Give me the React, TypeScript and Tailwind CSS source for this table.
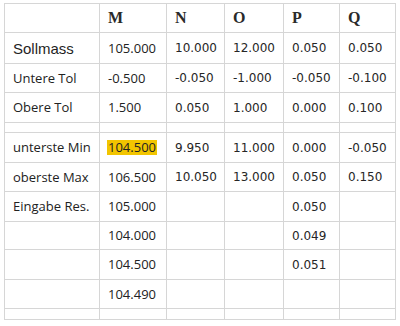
const cols = "grid-cols-[95px_67px_58px_59px_56px_56px]";

type Row = { h: string; cells: string[] };

const rows: Row[] = [
  { h: "h-[29px]", cells: ["", "M", "N", "O", "P", "Q"] },
  { h: "h-[31px]", cells: ["Sollmass", "105.000", "10.000", "12.000", "0.050", "0.050"] },
  { h: "h-[29px]", cells: ["Untere Tol", "-0.500", "-0.050", "-1.000", "-0.050", "-0.100"] },
  { h: "h-[30px]", cells: ["Obere Tol", "1.500", "0.050", "1.000", "0.000", "0.100"] },
  { h: "h-[10px]", cells: ["", "", "", "", "", ""] },
  { h: "h-[30px]", cells: ["unterste Min", "104.500", "9.950", "11.000", "0.000", "-0.050"] },
  { h: "h-[29px]", cells: ["oberste Max", "106.500", "10.050", "13.000", "0.050", "0.150"] },
  { h: "h-[30px]", cells: ["Eingabe Res.", "105.000", "", "", "0.050", ""] },
  { h: "h-[28px]", cells: ["", "104.000", "", "", "0.049", ""] },
  { h: "h-[30px]", cells: ["", "104.500", "", "", "0.051", ""] },
  { h: "h-[29px]", cells: ["", "104.490", "", "", "", ""] },
  { h: "h-[11px]", cells: ["", "", "", "", "", ""] },
];

function cellFont(r: number, c: number) {
  if (r === 0) return "font-['Liberation_Serif',serif] font-bold text-[16px] text-[#2a2a2a]";
  if (c === 0 && r === 1) return "font-['Liberation_Sans',sans-serif] text-[15px] text-[#1f1f1f]";
  if (c <= 1) return "font-['Open_Sans',sans-serif] text-[13px] text-[#222]";
  return "font-['DejaVu_Sans',sans-serif] text-[12px] text-[#262626]";
}

export default function App() {
  return (
    <div className="w-[400px] h-[326px] bg-white pl-[4px] pt-[3px]">
      <div className={`grid ${cols} w-[392px] border-l border-t border-[#d6d6d6]`}>
        {rows.map((row, r) =>
          row.cells.map((txt, c) => (
            <div
              key={`${r}-${c}`}
              className={`${row.h} border-r border-b border-[#d6d6d6] flex items-center pl-[8px] leading-none ${cellFont(r, c)}`}
            >
              {r === 5 && c === 1 ? (
                <span className="bg-[#f2c500] px-[1px] py-[1px] -ml-[1px]">{txt}</span>
              ) : (
                txt
              )}
            </div>
          ))
        )}
      </div>
    </div>
  );
}
